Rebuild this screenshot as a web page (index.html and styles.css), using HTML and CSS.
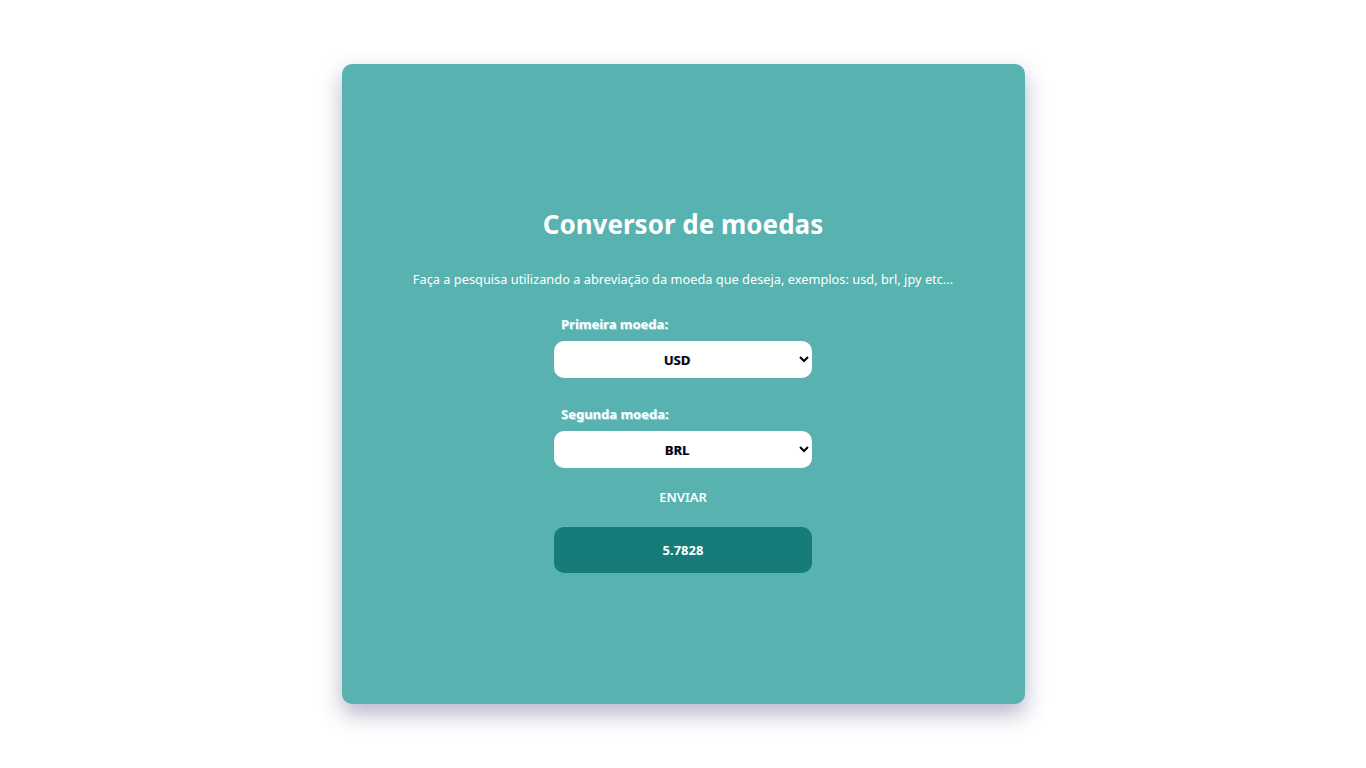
FILE: index.html
```html
<!DOCTYPE html>
<html lang="pt-BR">
<head>
<meta charset="utf-8">
<title>Conversor de moedas</title>
<link rel="stylesheet" href="styles.css">
</head>
<body>
<main class="page">
  <section class="card">
    <h1 class="title">Conversor de moedas</h1>
    <p class="desc">Faça a pesquisa utilizando a abreviação da moeda que deseja, exemplos: usd, brl, jpy etc...</p>
    <form class="form">
      <label class="label" for="m1">Primeira moeda:</label>
      <select class="select" id="m1"><option>USD</option></select>
      <label class="label label-2" for="m2">Segunda moeda:</label>
      <select class="select" id="m2"><option>BRL</option></select>
      <button type="button" class="send">ENVIAR</button>
      <div class="result">5.7828</div>
    </form>
  </section>
</main>
</body>
</html>
```
FILE: styles.css
```css
* { box-sizing: border-box; }
html, body { margin: 0; padding: 0; background: #ffffff; }
body { font-family: "Noto Sans", "Open Sans", sans-serif; }
.page {
  height: 768px;
  display: flex;
  justify-content: center;
  padding-top: 64px;
}
.card {
  width: 683px;
  height: 640px;
  background: #57b2b0;
  border-radius: 10px;
  box-shadow: 0 10px 22px rgba(90, 90, 140, 0.45);
  display: flex;
  flex-direction: column;
  align-items: center;
  padding-top: 140px;
  color: #fff;
}
.title {
  margin: 0;
  font-size: 26px;
  font-weight: 700;
  line-height: 40px;
}
.desc {
  margin: 26px 0 0;
  font-size: 12.8px;
  line-height: 18px;
}
.form {
  width: 258px;
  display: flex;
  flex-direction: column;
  margin-top: 27px;
}
.label {
  font-size: 13px;
  font-weight: 700;
  line-height: 18px;
  padding-left: 7px;
  text-shadow: 1px 1px 0 rgba(180, 240, 255, 0.6);
}
.label-2 { margin-top: 27px; }
.select {
  margin-top: 8px;
  height: 37px;
  border: none;
  border-radius: 10px;
  background: #fff;
  font-family: inherit;
  font-size: 13px;
  font-weight: 700;
  color: #000;
  text-align: center;
  text-align-last: center;
  padding: 0 4px;
  text-shadow: 1px 0 0 rgba(0, 60, 200, 0.35);
}
.send {
  margin-top: 20px;
  align-self: center;
  background: none;
  border: none;
  color: #fff;
  font-family: inherit;
  font-size: 13px;
  font-weight: 600;
  line-height: 18px;
  padding: 0;
}
.result {
  margin-top: 21px;
  height: 46px;
  border-radius: 10px;
  background: #167b79;
  display: flex;
  align-items: center;
  justify-content: center;
  font-size: 13px;
  font-weight: 700;
}
```
